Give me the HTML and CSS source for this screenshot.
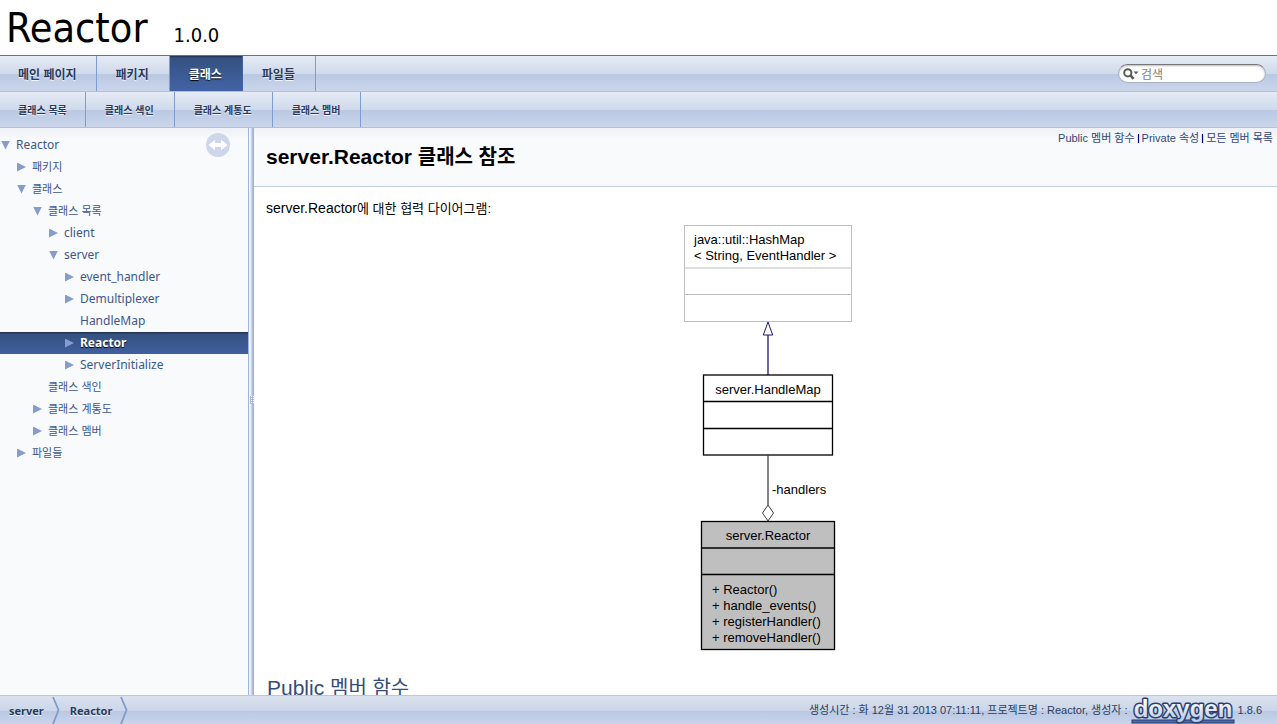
FILE: index.html
```html
<!DOCTYPE html>
<html lang="ko">
<head>
<meta charset="utf-8">
<title>Reactor: server.Reactor 클래스 참조</title>
<link rel="stylesheet" href="styles.css">
</head>
<body>
<header class="masthead">
  <span class="project-name">Reactor</span>
  <span class="project-number">1.0.0</span>
</header>
<nav class="tabs">
  <ul class="tab-list">
    <li><a href="#main">메인 페이지</a></li>
    <li><a href="#packages">패키지</a></li>
    <li class="current"><a href="#classes">클래스</a></li>
    <li><a href="#files">파일들</a></li>
  </ul>
  <div class="search-box">
    <svg class="search-icon" width="16" height="12" viewBox="0 0 16 12" aria-hidden="true">
      <circle cx="4.8" cy="4.8" r="3.6" fill="none" stroke="#5a5a5a" stroke-width="2"/>
      <path d="M7.2 7.2L10.6 10.8" stroke="#5a5a5a" stroke-width="2.6"/>
      <path d="M10.5 3.5H15.5L13 6.3Z" fill="#5a5a5a"/>
    </svg>
    <input class="search-field" type="text" placeholder="검색" aria-label="검색">
  </div>
</nav>
<nav class="tabs tabs-sub">
  <ul class="tab-list">
    <li><a href="#list">클래스 목록</a></li>
    <li><a href="#index">클래스 색인</a></li>
    <li><a href="#hierarchy">클래스 계통도</a></li>
    <li><a href="#members">클래스 멤버</a></li>
  </ul>
</nav>
<div class="workspace">
  <aside class="side-nav">
    <button class="sync" type="button" aria-label="동기화">
      <svg width="24" height="24" viewBox="0 0 24 24" aria-hidden="true">
        <circle cx="12" cy="12" r="12" fill="#cdd6eb"/>
        <path d="M2.5 12L9 6.8V10H15V6.8L21.5 12L15 17.2V14H9V17.2Z" fill="#fff"/>
      </svg>
    </button>
    <ul class="tree">
      <li class="l0 open"><a href="#r">Reactor</a></li>
      <li class="l1 closed ko"><a href="#p">패키지</a></li>
      <li class="l1 open ko"><a href="#c">클래스</a></li>
      <li class="l2 open ko"><a href="#cl">클래스 목록</a></li>
      <li class="l3 closed"><a href="#client">client</a></li>
      <li class="l3 open"><a href="#server">server</a></li>
      <li class="l4 closed"><a href="#eh">event_handler</a></li>
      <li class="l4 closed"><a href="#d">Demultiplexer</a></li>
      <li class="l4"><a href="#h">HandleMap</a></li>
      <li class="l4 closed selected"><a href="#sr">Reactor</a></li>
      <li class="l4 closed"><a href="#si">ServerInitialize</a></li>
      <li class="l2 ko"><a href="#ci">클래스 색인</a></li>
      <li class="l2 closed ko"><a href="#ch">클래스 계통도</a></li>
      <li class="l2 closed ko"><a href="#cm">클래스 멤버</a></li>
      <li class="l1 closed ko"><a href="#f">파일들</a></li>
    </ul>
  </aside>
  <div class="splitter">
    <svg width="4" height="8" viewBox="0 0 4 8" aria-hidden="true">
      <path d="M0 0H4V8H0Z" fill="#a5b6da"/>
      <path d="M1 .5H2M3 .5H4M1 2.5H2M3 2.5H4M1 4.5H2M3 4.5H4M1 6.5H2M3 6.5H4" stroke="#fff"/>
    </svg>
  </div>
  <main class="doc">
    <div class="doc-header">
      <h1>server.Reactor <span class="large-ko">클래스 참조</span></h1>
      <div class="summary"><a href="#pub">Public 멤버 함수</a><i></i><a href="#pri">Private 속성</a><i></i><a href="#all">모든 멤버 목록</a></div>
    </div>
    <div class="contents">
      <p>server.Reactor<span class="body-ko">에 대한 협력 다이어그램:</span></p>
      <svg class="diagram" width="170" height="428" viewBox="0 0 170 428" role="img" aria-label="server.Reactor 협력 다이어그램">
        <g fill="#fff" stroke="#bfbfbf">
          <rect x="1.5" y="1.5" width="167" height="96"/>
          <path d="M1.5 44H168.5M1.5 70.5H168.5"/>
        </g>
        <text x="11" y="20">java::util::HashMap</text>
        <text x="11" y="36">&lt; String, EventHandler &gt;</text>
        <path d="M85 111V151" stroke="#191970" stroke-width="1.3"/>
        <path d="M85 98L80.3 111H89.7Z" fill="#fff" stroke="#191970"/>
        <g fill="#fff" stroke="#000" stroke-width="1.3">
          <rect x="20.5" y="151" width="129" height="80"/>
          <path d="M20.5 177.5H149.5M20.5 204.5H149.5"/>
        </g>
        <text class="mid" x="85" y="170">server.HandleMap</text>
        <path d="M85 231V281" stroke="#404040" stroke-width="1.3"/>
        <path d="M85 281L90.5 289L85 297L79.5 289Z" fill="#fff" stroke="#404040"/>
        <text x="89" y="270">-handlers</text>
        <g fill="#bfbfbf" stroke="#000" stroke-width="1.3">
          <rect x="18.5" y="297.5" width="133" height="128"/>
          <path d="M18.5 324H151.5M18.5 350.5H151.5"/>
        </g>
        <text class="mid" x="85" y="316">server.Reactor</text>
        <text x="29" y="370">+ Reactor()</text>
        <text x="29" y="386">+ handle_events()</text>
        <text x="29" y="402">+ registerHandler()</text>
        <text x="29" y="418">+ removeHandler()</text>
      </svg>
      <h2>Public <span class="large-ko">멤버 함수</span></h2>
    </div>
  </main>
</div>
<footer class="bottom-bar">
  <ul class="path">
    <li><a href="#server">server</a><svg width="8" height="28" viewBox="0 0 8 28" aria-hidden="true"><path d="M1 1L6.5 14L1 28" fill="none" stroke="#7f9bcd" stroke-width="1.8"/></svg></li>
    <li><a href="#reactor">Reactor</a><svg width="8" height="28" viewBox="0 0 8 28" aria-hidden="true"><path d="M1 1L6.5 14L1 28" fill="none" stroke="#7f9bcd" stroke-width="1.8"/></svg></li>
  </ul>
  <div class="credit">
    <span>생성시간 : 화 12월 31 2013 07:11:11, 프로젝트명 : Reactor, 생성자 :</span>
    <a href="#doxygen" aria-label="doxygen"><svg class="logo" width="104" height="28" viewBox="0 0 104 28" aria-hidden="true">
      <defs><linearGradient id="ink" x1="0" y1="0" x2="0" y2="1"><stop offset="0.2" stop-color="#fff"/><stop offset="1" stop-color="#b4c6e8"/></linearGradient></defs>
      <rect x="1" y="24" width="102" height="3" fill="#4a6db5" stroke="#233a68"/>
      <text x="52" y="21">doxygen</text>
    </svg></a>
    <span>1.8.6</span>
  </div>
</footer>
</body>
</html>
```
FILE: styles.css
```css
* { box-sizing: border-box; }
html, body { height: 100%; }
body {
  margin: 0;
  display: flex;
  flex-direction: column;
  overflow: hidden;
  background: #fff;
  color: #000;
  font: 14px/22px "Liberation Sans", "Noto Sans CJK KR", sans-serif;
}
a { color: #3d578c; text-decoration: none; }
ul { list-style: none; margin: 0; padding: 0; }

.masthead {
  display: flex;
  flex: none;
  align-items: baseline;
  gap: 26px;
  height: 56px;
  padding: 0 6px;
  border-bottom: 1px solid #5373b4;
  font-family: "DejaVu Sans Condensed", "DejaVu Sans", sans-serif;
  line-height: 56px;
}
.project-name { font-size: 41px; }
.project-number { font-size: 20px; }

.tabs {
  display: flex;
  flex: none;
  justify-content: space-between;
  align-items: center;
  height: 36px;
  padding-right: 11px;
  border-bottom: 1px solid #b0bfdf;
  background: linear-gradient(#e6ebf5, #cfd9ea 52%, #b9c8e3 53%, #cbd6eb);
  font: bold 12px/35px "Noto Sans CJK KR", sans-serif;
}
.tab-list { display: flex; }
.tab-list li { border-right: 1px solid #7f9bd0; }
.tab-list a {
  display: block;
  height: 35px;
  padding: 0 20px 0 19px;
  color: #283a5d;
  text-shadow: 0 1px 1px rgba(255, 255, 255, 0.9);
}
.tab-list li:first-child a { padding: 0 19px 0 18px; }
.tab-list .current { background: linear-gradient(#1f3155, #35517f 6%, #3b5a93 50%, #4463a5); border-color: #4463a5; }
.tab-list .current a { color: #fff; text-shadow: 0 1px 1px #000; }
.tabs-sub { font-size: 10px; }
.tabs-sub .tab-list li:first-child a { padding: 0 18px; }

.search-box {
  display: flex;
  align-items: center;
  gap: 2px;
  width: 148px;
  height: 19px;
  padding-left: 4px;
  border: 1px solid #aab2c2;
  border-top-color: #777;
  border-radius: 10px;
  background: #fff;
  box-shadow: inset 0 1px 2px #bbb;
}
.search-icon { flex: none; }
.search-field {
  width: 100%;
  min-width: 0;
  height: 17px;
  padding: 0;
  border: 0;
  outline: 0;
  background: transparent;
  font: 12px/17px "Noto Sans CJK KR", sans-serif;
}
.search-field::placeholder { color: #808080; }

.workspace { display: flex; flex: 1; min-height: 0; }
.side-nav {
  position: relative;
  flex: none;
  width: 248px;
  padding-top: 6px;
  overflow: hidden;
  background: linear-gradient(#eef1f7, #f9fafc 12px);
}
.sync { position: absolute; top: 5px; right: 18px; padding: 0; border: 0; background: none; }
.sync svg { display: block; }
.tree { font: 12px/22px "Noto Sans", "Noto Sans CJK KR", sans-serif; }
.tree li { display: flex; align-items: center; height: 22px; }
.tree .ko { font-family: "Noto Sans CJK KR", sans-serif; font-size: 11px; line-height: 20px; }
.tree .ko a { padding-bottom: 2px; }
.tree li::before { content: ""; flex: none; width: 9px; height: 9px; margin: 0 6px 0 1px; }
.tree .open::before { background: #849dce; clip-path: polygon(0 0, 100% 0, 50% 100%); }
.tree .closed::before { background: #849dce; clip-path: polygon(0 0, 100% 50%, 0 100%); }
.l1 { padding-left: 16px; }
.l2 { padding-left: 32px; }
.l3 { padding-left: 48px; }
.l4 { padding-left: 64px; }
.tree .selected { background: linear-gradient(#1f3155, #35517f 12%, #4060a0); }
.tree .selected a { color: #fff; font-weight: bold; text-shadow: 0 1px 1px #000; }

.splitter {
  display: flex;
  flex: none;
  align-items: center;
  justify-content: flex-end;
  width: 6px;
  padding-bottom: 24px;
  border-left: 1px solid #9fb3dc;
  background: linear-gradient(90deg, #fff, #dde4f2 40%, #a5b6da 75%, #9cb0da);
}

.doc { flex: 1; min-width: 0; overflow: hidden; }
.doc-header {
  display: flex;
  justify-content: space-between;
  align-items: flex-start;
  height: 59px;
  padding: 0 4px 0 12px;
  border-bottom: 1px solid #c4cfe5;
  background: linear-gradient(#eef1f7, #f9fafc 12px);
}
h1 { margin: 0; font-size: 21px; line-height: 57px; }
.large-ko { font-size: 20px; }
.body-ko { font-size: 13px; }
.summary { display: flex; align-items: center; gap: 3px; font-size: 11px; line-height: 21px; }
.summary a { color: #2f4678; }
.summary i { width: 1px; height: 9px; background: #00008b; box-shadow: 0 0 1px #00008b; }
.contents { padding: 10px 8px 0 12px; }
.contents p { margin: 0; }
.diagram { display: block; margin: 4px auto 0; }
.diagram text { font: 13px "Liberation Sans", sans-serif; fill: #000; }
.diagram .mid { text-anchor: middle; }
h2 { margin: 20px 1px 0; color: #354c7b; font-size: 21px; font-weight: normal; line-height: 32px; }

.bottom-bar {
  display: flex;
  flex: none;
  justify-content: space-between;
  height: 29px;
  padding: 0 15px 0 9px;
  border-top: 1px solid #b9c7e3;
  background: linear-gradient(#dbe2ef, #ccd6e8 52%, #b9c8e3 53%, #c9d4ea);
}
.path { display: flex; gap: 10px; font: bold 11px/30px "Noto Sans", sans-serif; }
.path li { display: flex; gap: 8px; }
.path a { color: #283a5d; text-shadow: 0 1px 1px rgba(255, 255, 255, 0.9); }
.credit { display: flex; align-items: center; gap: 3px; font-size: 11px; line-height: 28px; color: #2a3d61; }
.credit a, .logo { display: block; }
.logo text {
  font: bold 24px "Liberation Sans", sans-serif;
  text-anchor: middle;
  fill: url(#ink);
  stroke: #283f70;
  stroke-width: 3px;
  stroke-linejoin: round;
  paint-order: stroke;
}
```
